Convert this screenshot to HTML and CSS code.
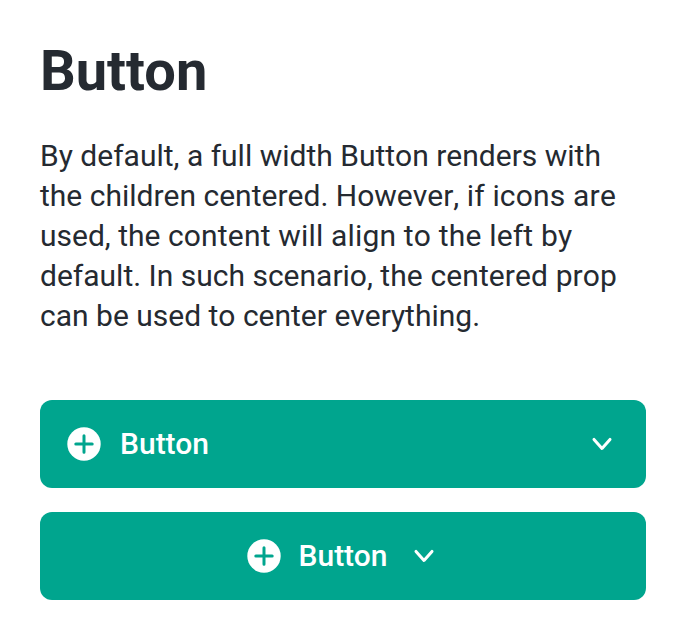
FILE: index.html
```html
<!DOCTYPE html>
<html lang="en">
<head>
<meta charset="utf-8">
<title>Button</title>
<link rel="stylesheet" href="styles.css">
</head>
<body>
<main class="page">
<h1 class="title">Button</h1>
<p class="intro">By default, a full width Button renders with the children centered. However, <span class="loose">if icons are</span> used, the <span class="loose">content will align to the left by</span> default. In such scenario, <span class="open">the centered prop</span> can be used to center everything.</p>
<div class="stack">
<button class="btn" type="button">
<svg class="icon" viewBox="0 0 20 20"><circle cx="10" cy="10" r="8.35" fill="#fff"/><path class="plus" d="M10 5.9v8.2M5.9 10h8.2"/></svg>
<span class="label">Button</span>
<svg class="icon chevron" viewBox="0 0 20 20"><path d="M6 7.7l4 4.5 4-4.5"/></svg>
</button>
<button class="btn btn-centered" type="button">
<svg class="icon" viewBox="0 0 20 20"><circle cx="10" cy="10" r="8.35" fill="#fff"/><path class="plus" d="M10 5.9v8.2M5.9 10h8.2"/></svg>
<span class="label">Button</span>
<svg class="icon chevron" viewBox="0 0 20 20"><path d="M6 7.7l4 4.5 4-4.5"/></svg>
</button>
</div>
</main>
</body>
</html>
```
FILE: styles.css
```css
body {
  margin: 0;
  background: #fff;
  color: #252a31;
  font-family: Roboto, sans-serif;
}
.page { padding: 40px; }
.title {
  margin: -1px 0 0;
  font-size: 56px;
  line-height: 64px;
  font-weight: 700;
}
.intro {
  margin: 33px 0 64px;
  font-size: 30px;
  line-height: 40px;
  font-kerning: none;
}
.loose { letter-spacing: 0.18px; }
.open { letter-spacing: 0.1px; }
.stack { display: grid; gap: 24px; }
.btn {
  display: flex;
  align-items: center;
  gap: 16px;
  box-sizing: border-box;
  width: 100%;
  height: 88px;
  padding: 0 24px;
  border: 0;
  border-radius: 12px;
  background: #00a58e;
  color: #fff;
  font: 500 30px/40px Roboto, sans-serif;
}
.btn-centered { justify-content: center; }
.btn-centered .icon { position: relative; left: 1px; }
.icon { width: 40px; height: 40px; flex: none; }
.plus { fill: none; stroke: #00a58e; stroke-width: 1.5; stroke-linecap: round; }
.chevron { fill: none; stroke: #fff; stroke-width: 1.5; stroke-linecap: round; stroke-linejoin: round; }
.label { flex: 1; text-align: left; }
.btn-centered .label { flex: none; }
```
